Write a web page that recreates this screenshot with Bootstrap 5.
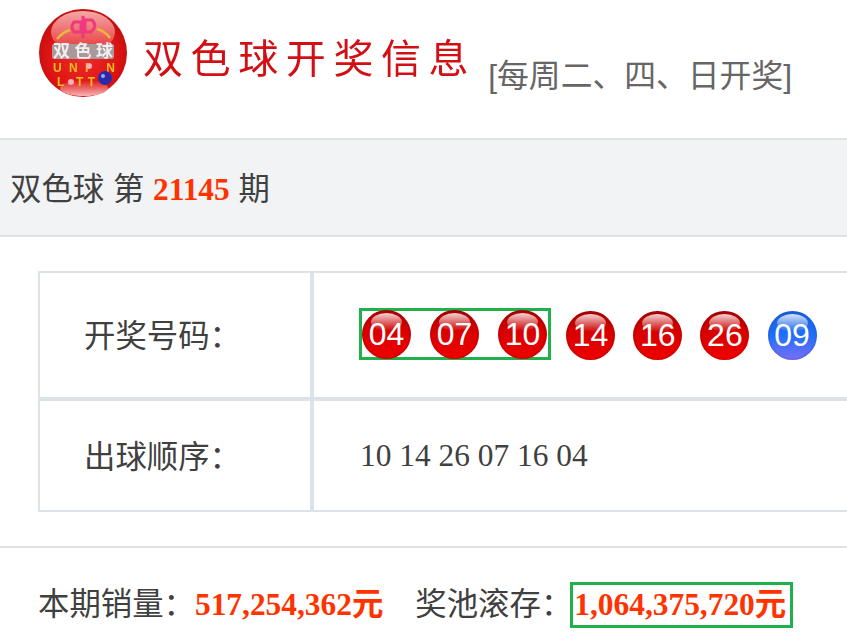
<!DOCTYPE html>
<html lang="zh-CN">
<head>
  <meta charset="UTF-8">
  <meta name="viewport" content="width=device-width, initial-scale=1.0">
  <title>双色球开奖信息</title>
  <link href="https://cdn.jsdelivr.net/npm/bootstrap@5.3.2/dist/css/bootstrap.min.css" rel="stylesheet">
  <style>
    html, body { overflow: hidden; }
    body {
      font-family: "Liberation Sans", "Noto Sans CJK SC", sans-serif;
      font-size: 31.4px;
      line-height: 1.5;
      color: #404040;
      background: #fff;
    }
    .page-head { height: 140px; padding: 8px 0 0 38px; border-bottom: 2px solid #dee2e6; }
    .head-logo { width: 90px; height: 90px; flex: none; filter: blur(.6px); }
    .head-title {
      margin: 19px 0 0 15px;
      font-size: 40px;
      line-height: 64px;
      letter-spacing: 7.6px;
      color: #d40f14;
      white-space: nowrap;
      filter: blur(.4px);
    }
    .head-note { margin: 39px 0 0 12px; font-size: 31.8px; color: #666; line-height: 58px; white-space: nowrap; }
    .issue-band { height: 97px; padding: 4px 0 0 10px; background: #f1f3f5; border-bottom: 2px solid #dee2e6; }
    .hot-num { font-family: "Liberation Serif", "Noto Sans CJK SC", serif; font-weight: 700; color: #f30; }
    .draw-wrap { padding: 34px 0 34px 38px; border-bottom: 2px solid #dee2e6; }
    .draw-table { width: 809px; table-layout: fixed; border-collapse: separate; border-spacing: 0; margin: 0; }
    .draw-table td { border: 2px solid #dbe2e8; vertical-align: middle; padding: 0; }
    .draw-table td:last-child { border-right: 0; }
    .draw-table .label-cell { width: 274px; padding: 4px 0 0 44px; }
    .row-balls td { height: 128px; }
    .row-order td { height: 113px; }
    .ball-row { padding-left: 46px; gap: 18.2px; }
    .ball-box { gap: 19px; padding: 0 1px 0 0; margin: -2px -3.2px 0 -1px; border: 3px solid #20b14c; height: 52px; align-items: center; }
    .lotto-ball {
      position: relative;
      flex: none;
      width: 49px;
      height: 49px;
      border-radius: 50%;
      color: #fff;
      font-size: 32px;
      line-height: 49px;
      text-align: center;
      background:
        radial-gradient(circle at 50% 50%, rgba(110, 0, 0, 0) 62%, rgba(110, 0, 0, .6) 88%, rgba(255, 255, 255, .75) 100%),
        linear-gradient(#a80000 0, #d60000 40%, #f00000 100%);
    }
    .lotto-ball span { position: relative; }
    .lotto-ball::before {
      content: "";
      position: absolute;
      left: 9px;
      top: 3px;
      width: 31px;
      height: 18px;
      border-radius: 50%;
      background: linear-gradient(rgba(255, 235, 235, .9), rgba(240, 90, 90, 0));
    }
    .ball-blue {
      background:
        radial-gradient(circle at 50% 50%, rgba(10, 50, 140, 0) 62%, rgba(10, 50, 140, .5) 88%, rgba(255, 255, 255, .75) 100%),
        linear-gradient(#1a5fd8 0, #1f6ffa 50%, #7c6ef5 100%);
    }
    .ball-blue::before { background: linear-gradient(rgba(235, 243, 255, .9), rgba(90, 150, 245, 0)); }
    .order-text { padding-left: 46px; font-family: "Liberation Serif", serif; }
    .sales-line { padding: 33px 0 0 38px; white-space: nowrap; }
    .pool-box { display: inline-block; border: 3px solid #20b14c; padding: 0 4px 0 1px; line-height: 40px; margin-left: -2px; }
    .sales-gap { margin-left: 32px; }
  </style>
</head>
<body>
  <div class="page-head d-flex align-items-start">
    <svg class="head-logo" viewBox="0 0 90 90" role="img" aria-label="双色球">
      <defs>
        <radialGradient id="logoRed" cx="50%" cy="55%" r="52%">
          <stop offset="0" stop-color="#ee2a2a"/>
          <stop offset=".75" stop-color="#e01414"/>
          <stop offset="1" stop-color="#c40f0f"/>
        </radialGradient>
        <linearGradient id="logoShine" x1="0" y1="0" x2="0" y2="1">
          <stop offset="0" stop-color="#f4a8a8"/>
          <stop offset="1" stop-color="#e83030"/>
        </linearGradient>
        <linearGradient id="logoFoot" x1="0" y1="0" x2="0" y2="1">
          <stop offset="0" stop-color="#e01414"/>
          <stop offset="1" stop-color="#f6b4b4"/>
        </linearGradient>
      </defs>
      <circle cx="45" cy="45" r="44" fill="url(#logoRed)"/>
      <ellipse cx="45" cy="24" rx="32" ry="21" fill="url(#logoShine)"/>
      <ellipse cx="46" cy="80" rx="24" ry="8" fill="url(#logoFoot)"/>
      <path d="M19 31q6-7 13-9M59 21q8 2 13 9" fill="none" stroke="#e8b840" stroke-width="2.5"/>
      <path d="M36 14h7v10h-7q-4-5 0-10zM47 12h7q6 6-1 12h-6zM45 8v22" fill="none" stroke="#f0387c" stroke-width="3"/>
      <rect x="14" y="36" width="62" height="15" rx="2" fill="#a89a9a"/>
      <text x="45" y="49" text-anchor="middle" font-size="17" font-family="Noto Sans CJK SC" font-weight="700" fill="#f2eeee" textLength="60">双色球</text>
      <text x="15" y="64" font-size="12" font-family="Liberation Sans" font-weight="700" fill="#e8c020" textLength="62">UNI  N</text>
      <text x="19" y="78" font-size="12" font-family="Liberation Sans" font-weight="700" fill="#e8c020" textLength="38">L TT</text>
      <circle cx="67" cy="70" r="7" fill="#2a2aa8"/>
      <circle cx="65" cy="68" r="2" fill="#9aa8f0"/>
      <circle cx="51" cy="58" r="3" fill="#f6b0b0"/>
      <circle cx="33" cy="74" r="3" fill="#f6b0b0"/>
    </svg>
    <div class="head-title">双色球开奖信息</div>
    <div class="head-note">[每周二、四、日开奖]</div>
  </div>

  <div class="issue-band d-flex align-items-center">
    <div>双色球 第 <span class="hot-num">21145</span> 期</div>
  </div>

  <div class="draw-wrap">
    <table class="draw-table">
      <tr class="row-balls">
        <td class="label-cell">开奖号码：</td>
        <td>
          <div class="ball-row d-flex align-items-center">
            <div class="ball-box d-flex">
              <div class="lotto-ball"><span>04</span></div>
              <div class="lotto-ball"><span>07</span></div>
              <div class="lotto-ball"><span>10</span></div>
            </div>
            <div class="lotto-ball"><span>14</span></div>
            <div class="lotto-ball"><span>16</span></div>
            <div class="lotto-ball"><span>26</span></div>
            <div class="lotto-ball ball-blue"><span>09</span></div>
          </div>
        </td>
      </tr>
      <tr class="row-order">
        <td class="label-cell">出球顺序：</td>
        <td><div class="order-text">10 14 26 07 16 04</div></td>
      </tr>
    </table>
  </div>

  <div class="sales-line">本期销量：<span class="hot-num">517,254,362元</span><span class="sales-gap">奖池滚存：</span><span class="pool-box hot-num">1,064,375,720元</span></div>

  <script src="https://cdn.jsdelivr.net/npm/bootstrap@5.3.2/dist/js/bootstrap.bundle.min.js"></script>
</body>
</html>
